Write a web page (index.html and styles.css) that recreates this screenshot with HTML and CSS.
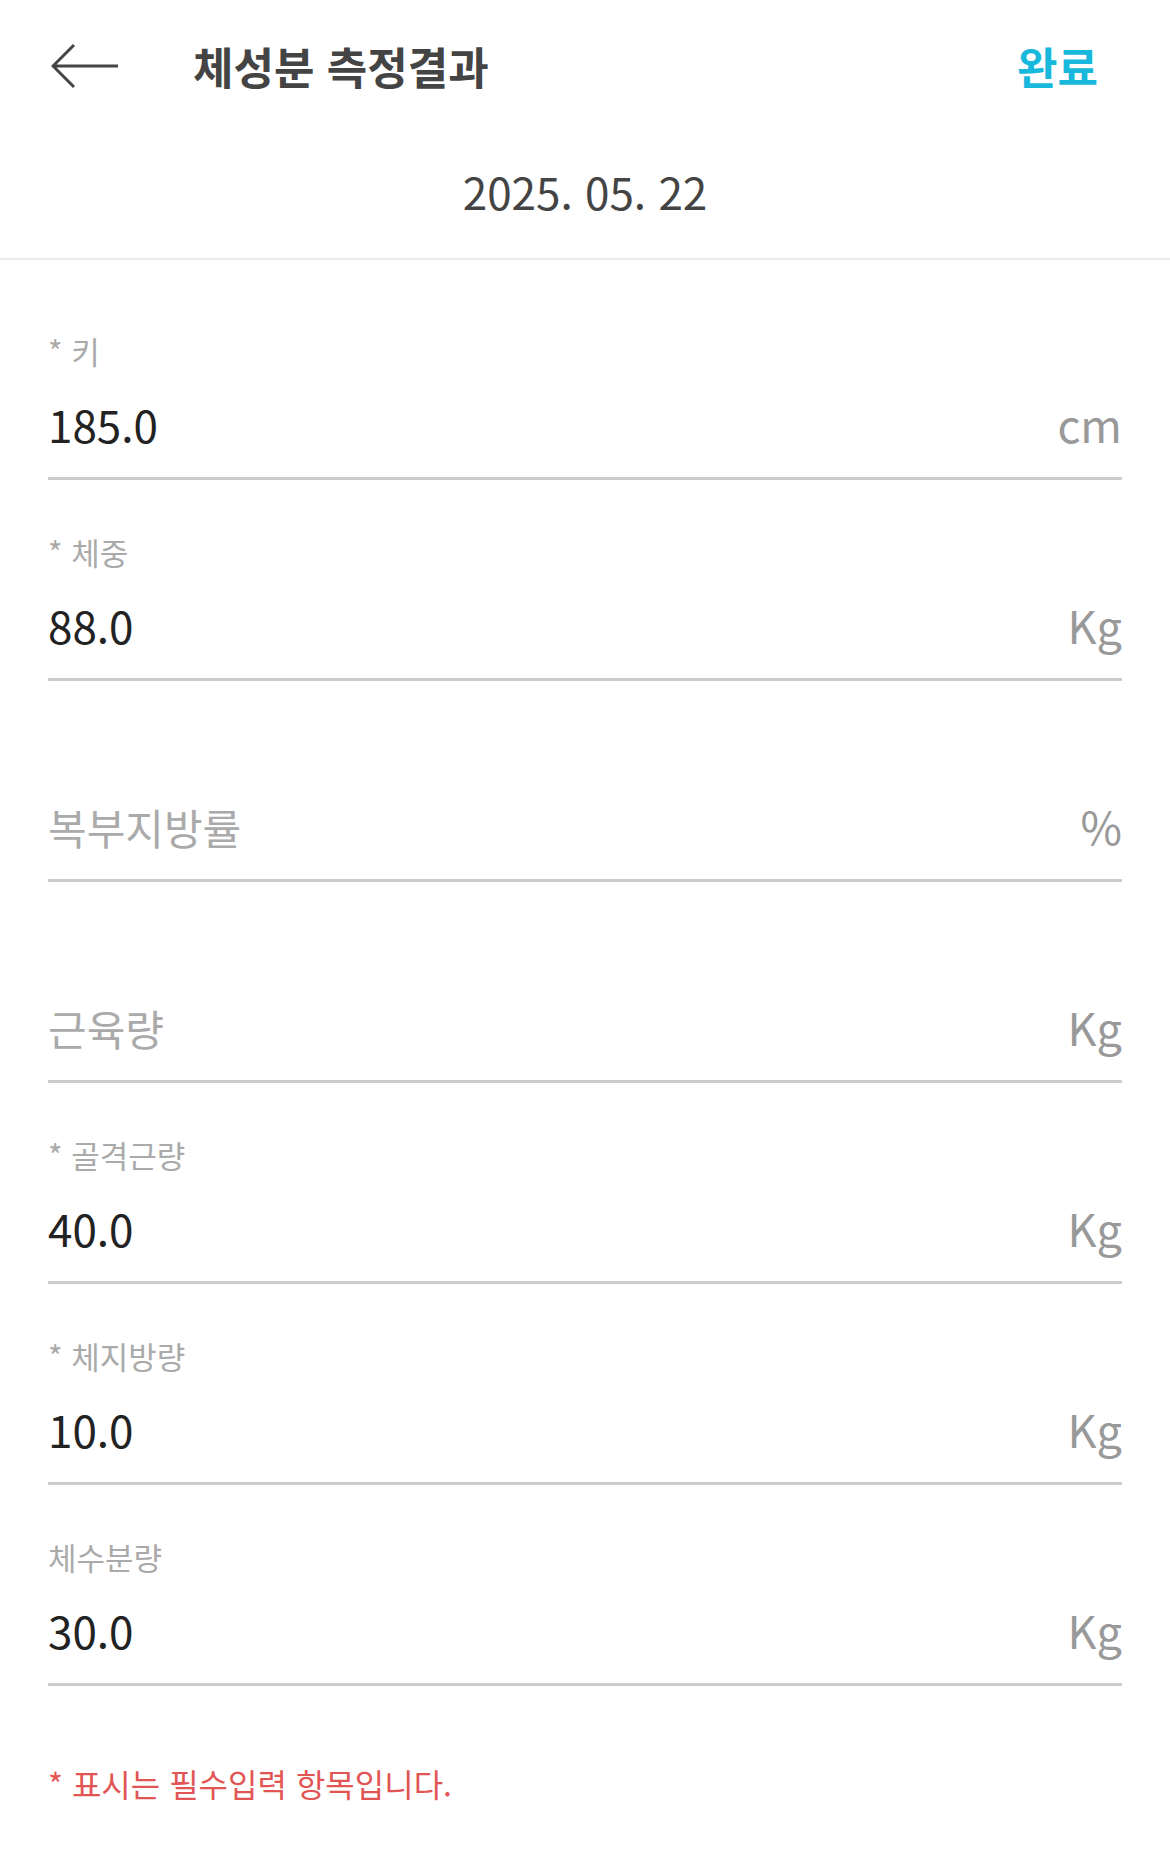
FILE: index.html
```html
<!DOCTYPE html>
<html lang="ko">
<head>
    <meta charset="UTF-8">
    <meta name="viewport" content="width=device-width, initial-scale=1.0">
    <title>체성분 측정결과</title>
    <link rel="stylesheet" href="styles.css">
</head>
<body>
    <div class="topbar">
        <button class="back" type="button" aria-label="뒤로">
            <svg width="68" height="46" viewBox="0 0 68 46">
                <path d="M23 2 L2 23 L23 44 M2 23 H67" fill="none" stroke="#444" stroke-width="3"/>
            </svg>
        </button>
        <h1 class="title">체성분 측정결과</h1>
        <button class="done" type="button">완료</button>
    </div>

    <div class="date">2025. 05. 22</div>

    <form class="form">
        <div class="field">
            <label class="label" for="height">* 키</label>
            <div class="row">
                <input class="value" id="height" type="text" value="185.0">
                <span class="unit">cm</span>
            </div>
        </div>
        <div class="field">
            <label class="label" for="weight">* 체중</label>
            <div class="row">
                <input class="value" id="weight" type="text" value="88.0">
                <span class="unit">Kg</span>
            </div>
        </div>
        <div class="field">
            <label class="label" for="abdominal"></label>
            <div class="row">
                <input class="value empty" id="abdominal" type="text" placeholder="복부지방률">
                <span class="unit">%</span>
            </div>
        </div>
        <div class="field">
            <label class="label" for="muscle"></label>
            <div class="row">
                <input class="value empty" id="muscle" type="text" placeholder="근육량">
                <span class="unit">Kg</span>
            </div>
        </div>
        <div class="field">
            <label class="label" for="skeletal">* 골격근량</label>
            <div class="row">
                <input class="value" id="skeletal" type="text" value="40.0">
                <span class="unit">Kg</span>
            </div>
        </div>
        <div class="field">
            <label class="label" for="fat">* 체지방량</label>
            <div class="row">
                <input class="value" id="fat" type="text" value="10.0">
                <span class="unit">Kg</span>
            </div>
        </div>
        <div class="field">
            <label class="label" for="water">체수분량</label>
            <div class="row">
                <input class="value" id="water" type="text" value="30.0">
                <span class="unit">Kg</span>
            </div>
        </div>

        <p class="note">* 표시는 필수입력 항목입니다.</p>
    </form>
</body>
</html>
```

FILE: styles.css
```css
body {
    margin: 0;
    padding: 0;
    font-family: "Noto Sans CJK KR", "Noto Sans", sans-serif;
    background-color: #fff;
    color: #222;
}

.topbar {
    display: flex;
    align-items: center;
    height: 132px;
    padding: 0 72px 0 51px;
}

.back {
    display: flex;
    padding: 0;
    border: none;
    background: none;
    cursor: pointer;
}

.title {
    flex: 1;
    margin: 0 0 0 74px;
    font-size: 44px;
    font-weight: 700;
    line-height: 1;
    color: #444;
}

.done {
    padding: 0;
    border: none;
    background: none;
    font-family: inherit;
    font-size: 44px;
    font-weight: 700;
    line-height: 1;
    color: #17b8dc;
    cursor: pointer;
}

.date {
    box-sizing: border-box;
    height: 128px;
    padding-bottom: 8px;
    display: flex;
    justify-content: center;
    align-items: center;
    font-size: 44px;
    line-height: 1;
    color: #444;
    border-bottom: 2px solid #ebebeb;
}

.form {
    padding: 71px 48px 0;
}

.field + .field {
    margin-top: 52px;
}

.label {
    display: block;
    height: 40px;
    font-size: 31px;
    line-height: 40px;
    color: #aaa;
}

.row {
    display: flex;
    align-items: center;
    margin-top: 23px;
    padding-bottom: 23px;
    border-bottom: 3px solid #ccc;
}

.value {
    flex: 1;
    min-width: 0;
    height: 60px;
    padding: 0;
    border: none;
    outline: none;
    background: none;
    font-family: inherit;
    font-size: 44px;
    color: #222;
}

.value.empty {
    font-size: 42px;
}

.value::placeholder {
    color: #aaa;
}

.unit {
    font-size: 45px;
    line-height: 60px;
    color: #999;
}

.note {
    margin: 77px 0 0;
    font-size: 32px;
    line-height: 40px;
    color: #e25555;
}
```
